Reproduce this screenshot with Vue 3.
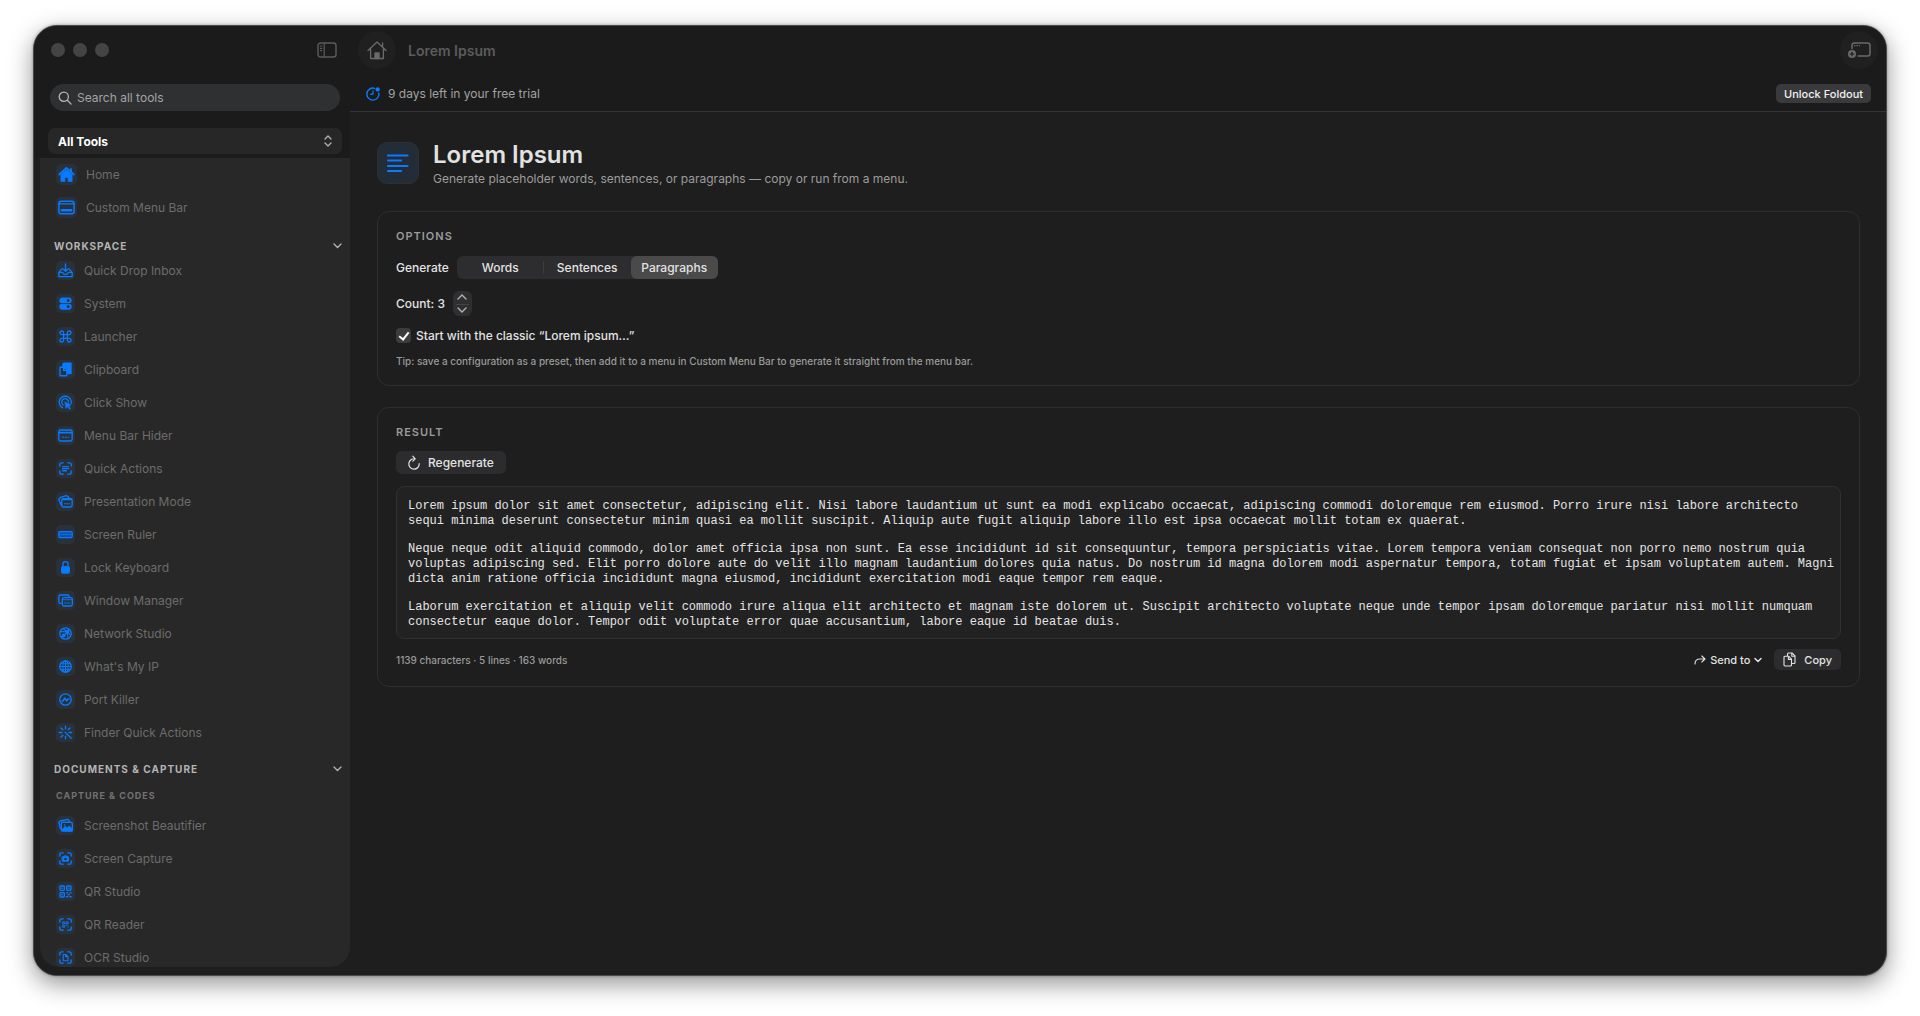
<script setup>
import { ref } from 'vue'

const icons = {
  home: '<path d="M3 10 10 3.8 17 10" stroke-width="1.6"/><path d="M14.3 4.6v3" stroke-width="1.6"/><path d="M4.8 10.2 10 5.8l5.2 4.4v6.3H11.6v-4H8.4v4H4.8z" fill="currentColor" stroke-width="1"/>',
  menubar: '<rect x="2.8" y="4" width="14.4" height="12" rx="2.2"/><path d="M3 6.6h14" stroke-width="1.2"/><path d="M5.6 12.6h8.8" stroke-width="2.4"/>',
  inbox: '<path d="M6.6 8 3 12v4.4h14V12l-3.600-4M3 12h4c.4 1.500 1.400 2.200 3 2.200s2.600-.7 3-2.200h4M10 3v7.600M7.800 8.600 10 10.800l2.200-2.200"/>',
  system: '<rect x="4.200" y="4.400" width="11.600" height="5" rx="2.500" fill="currentColor"/><rect x="4.200" y="10.800" width="11.600" height="5" rx="2.500" fill="currentColor"/><circle cx="12.800" cy="6.900" r="1.500" fill="#282828" stroke="none"/><circle cx="12.800" cy="13.300" r="1.500" fill="#282828" stroke="none"/><path d="M3.500 10.100h13" stroke="#2a333d" stroke-width=".8"/>',
  command: '<path d="M8 8H6.200A1.900 1.900 0 1 1 8 6.200v7.600A1.900 1.900 0 1 1 6.200 12h7.600a1.900 1.900 0 1 1-1.800 1.800V6.200A1.900 1.900 0 1 1 13.800 8z"/>',
  clipboard: '<path d="M8.500 3.200h7.300v11.200h-3.600V9.600L9 6.600H7.200V4.500z" fill="currentColor"/><path d="M4.200 7.600h4.200l3 3v6H4.200zM8 7.800v3.200h3.200"/>',
  click: '<path d="M7 15.600a6.400 6.400 0 1 1 9-4.600M7.600 12.600a3.600 3.600 0 1 1 5.600-3"/><path d="m9.600 9.400 6.400 3.200-2.600.9 1.800 2.700-1.200.8-1.800-2.800-1.800 1.900z" fill="currentColor" stroke-width=".6"/>',
  hider: '<rect x="3" y="4.200" width="14" height="11.600" rx="1.800"/><path d="M3 7h14" stroke-width="1.800"/><path d="M6.500 11.800h7" stroke-dasharray="1.600 1.400" stroke-width="1"/>',
  scantext: '<path d="M4 7.400V6a2 2 0 0 1 2-2h1.600M12.400 4H14a2 2 0 0 1 2 2v1.400M16 12.600V14a2 2 0 0 1-2 2h-1.600M7.600 16H6a2 2 0 0 1-2-2v-1.400M7 8h6M6.600 10.200h7M7 12.400h4"/>',
  windows: '<path d="M5.600 13H4.800A1.800 1.800 0 0 1 3 11.200V6a1.800 1.800 0 0 1 1.800-1.800h7.400A1.800 1.800 0 0 1 14 6"/><rect x="6.600" y="7" width="10.600" height="8.800" rx="1.800"/><path d="M6.800 9.200h10.200" stroke-width="1"/><path d="M9 12.600h6" stroke-width="1" stroke-dasharray="1.200 1"/>',
  present: '<path d="M5.400 13.600 3 7.800 4.600 5.600 11 3.800l2.600 2"/><rect x="6" y="7" width="11" height="8.800" rx="1.800"/><path d="M7 8h9.200" stroke-width="1.600"/><path d="M9 12.400h5.600" stroke-width="1" stroke-dasharray="1.200 1"/>',
  ruler: '<rect x="3" y="7" width="14" height="6.200" rx="1" fill="#0a4fa8"/><path d="M5 9.800h10" stroke-width="1" stroke-dasharray="1.200 1"/>',
  lock: '<rect x="5.800" y="9" width="8.400" height="7" rx="1.200" fill="currentColor" stroke-width="1"/><path d="M7.300 9V6.600a2.700 2.700 0 0 1 5.400 0V9"/>',
  network: '<circle cx="10" cy="10" r="6"/><path d="M4.400 8.200c4-.6 8 0 11 3.400M7.400 4.800c3.600 2.200 5.400 5.600 5.200 10.600M5.400 13.600C9 12 12.600 8.600 13.600 5.200" stroke-width="1.200"/><circle cx="8" cy="12" r="1.400" fill="currentColor"/><circle cx="12.200" cy="8" r="1.200" fill="currentColor"/>',
  globe: '<circle cx="10" cy="10" r="6"/><ellipse cx="10" cy="10" rx="2.800" ry="6" stroke-width="1.100"/><path d="M10 4v12M4 10h12M5 7h10M5 13h10" stroke-width="1.100"/>',
  port: '<circle cx="10" cy="10" r="6"/><path d="M6.200 11.600h1.300L9 8.400l2.200 3 1.200-2h1.400" stroke-width="1.600"/>',
  sparkle: '<path d="M10 3.400v2.800M10 13.800v2.800M3.400 10h2.800M13.800 10h2.800M5.300 5.300l1.900 1.900M14.700 5.300l-1.900 1.900M5.300 14.700l1.900-1.900M9.600 9.600l6.400 6.400"/>',
  photos: '<path d="M4.600 13 3 6.600 4.800 5 12.800 3.600l1.200 2"/><rect x="5.600" y="6.600" width="11.600" height="9.200" rx="1.600"/><path d="m6 15.400 3.800-4 2 2 2-2.400 3.200 3v1.600z" fill="currentColor"/><circle cx="9" cy="9.600" r=".8" fill="currentColor" stroke="none"/>',
  camera: '<path d="M4 7.400V6a2 2 0 0 1 2-2h1.600M12.400 4H14a2 2 0 0 1 2 2v1.400M16 12.600V14a2 2 0 0 1-2 2h-1.600M7.600 16H6a2 2 0 0 1-2-2v-1.400"/><path d="M6.800 8.200h1.400l.8-1h2l.8 1h1.400v4.600H6.800z" fill="currentColor" stroke-width="1"/><circle cx="10" cy="10.500" r="1.300" fill="#1d3148" stroke="none"/>',
  qr: '<rect x="4.200" y="4.200" width="4.600" height="4.600" rx=".8"/><rect x="11.200" y="4.200" width="4.600" height="4.600" rx=".8"/><rect x="4.200" y="11.200" width="4.600" height="4.600" rx=".8"/><path d="M6 6.500h1M13 6.500h1M6 13.500h1M11 11.500h1.400M14.600 11.500H16M12.600 13.500h1.400M11 15.500h1.400M14.600 15.500H16" stroke-width="1.400"/>',
  qrscan: '<path d="M4 7.400V6a2 2 0 0 1 2-2h1.600M12.400 4H14a2 2 0 0 1 2 2v1.400M16 12.600V14a2 2 0 0 1-2 2h-1.600M7.600 16H6a2 2 0 0 1-2-2v-1.400"/><path d="M7.300 7.300h2v2h-2zM10.900 7.300h2v2h-2zM7.300 10.900h2v2h-2zM11 11h.8M12.400 12.600h.6" stroke-width="1"/>',
  docscan: '<path d="M4 7.400V6a2 2 0 0 1 2-2h1.600M12.400 4H14a2 2 0 0 1 2 2v1.400M16 12.600V14a2 2 0 0 1-2 2h-1.600M7.600 16H6a2 2 0 0 1-2-2v-1.400"/><path d="M7.600 6.800h2.800l2.200 2.200v4.400h-5zM10.200 7v2.200h2.200" stroke-width="1.200"/>',
}

const pinned = [
  { name: 'Home', icon: 'home' },
  { name: 'Custom Menu Bar', icon: 'menubar' },
]
const workspace = [
  { name: 'Quick Drop Inbox', icon: 'inbox' },
  { name: 'System', icon: 'system' },
  { name: 'Launcher', icon: 'command' },
  { name: 'Clipboard', icon: 'clipboard' },
  { name: 'Click Show', icon: 'click' },
  { name: 'Menu Bar Hider', icon: 'hider' },
  { name: 'Quick Actions', icon: 'scantext' },
  { name: 'Presentation Mode', icon: 'present' },
  { name: 'Screen Ruler', icon: 'ruler' },
  { name: 'Lock Keyboard', icon: 'lock' },
  { name: 'Window Manager', icon: 'windows' },
  { name: 'Network Studio', icon: 'network' },
  { name: "What's My IP", icon: 'globe' },
  { name: 'Port Killer', icon: 'port' },
  { name: 'Finder Quick Actions', icon: 'sparkle' },
]
const capture = [
  { name: 'Screenshot Beautifier', icon: 'photos' },
  { name: 'Screen Capture', icon: 'camera' },
  { name: 'QR Studio', icon: 'qr' },
  { name: 'QR Reader', icon: 'qrscan' },
  { name: 'OCR Studio', icon: 'docscan' },
]

const units = ['Words', 'Sentences', 'Paragraphs']
const unit = ref('Paragraphs')
const count = ref(3)
const classic = ref(true)
const search = ref('')
const filter = ref('All Tools')

const paragraphs = [
  'Lorem ipsum dolor sit amet consectetur, adipiscing elit. Nisi labore laudantium ut sunt ea modi explicabo occaecat, adipiscing commodi doloremque rem eiusmod. Porro irure nisi labore architecto sequi minima deserunt consectetur minim quasi ea mollit suscipit. Aliquip aute fugit aliquip labore illo est ipsa occaecat mollit totam ex quaerat.',
  'Neque neque odit aliquid commodo, dolor amet officia ipsa non sunt. Ea esse incididunt id sit consequuntur, tempora perspiciatis vitae. Lorem tempora veniam consequat non porro nemo nostrum quia voluptas adipiscing sed. Elit porro dolore aute do velit illo magnam laudantium dolores quia natus. Do nostrum id magna dolorem modi aspernatur tempora, totam fugiat et ipsam voluptatem autem. Magni dicta anim ratione officia incididunt magna eiusmod, incididunt exercitation modi eaque tempor rem eaque.',
  'Laborum exercitation et aliquip velit commodo irure aliqua elit architecto et magnam iste dolorem ut. Suscipit architecto voluptate neque unde tempor ipsam doloremque pariatur nisi mollit numquam consectetur eaque dolor. Tempor odit voluptate error quae accusantium, labore eaque id beatae duis.',
]
</script>

<template>
  <div class="desktop">
    <div class="window">
      <aside class="sidebar">
        <div class="titlebar">
          <div class="lights"><i></i><i></i><i></i></div>
          <button class="plain" aria-label="Toggle sidebar">
            <svg width="20" height="16" viewBox="0 0 20 16" fill="none" stroke="currentColor" stroke-width="1.4">
              <rect x="1" y="1" width="18" height="14" rx="2.500" />
              <path d="M7.200 1v14M3 4h2.200M3 6.300h2.200M3 8.600h2.200" stroke-width="1.200" />
            </svg>
          </button>
        </div>
        <label class="search">
          <svg width="14" height="14" viewBox="0 0 14 14" fill="none" stroke="currentColor" stroke-width="1.300" stroke-linecap="round">
            <circle cx="5.800" cy="5.800" r="4.600" /><path d="m9.300 9.300 3.700 3.700" />
          </svg>
          <input v-model="search" type="text" placeholder="Search all tools" aria-label="Search all tools" />
        </label>
        <label class="filter">
          <select v-model="filter" aria-label="Tool group">
            <option>All Tools</option>
          </select>
          <svg width="8" height="12" viewBox="0 0 8 12" fill="none" stroke="currentColor" stroke-width="1.300" stroke-linecap="round" stroke-linejoin="round">
            <path d="m1 4 3-3 3 3M1 8l3 3 3-3" />
          </svg>
        </label>
        <nav class="list">
          <a v-for="t in pinned" :key="t.name" href="#" class="tool pinned">
            <span class="tile"><svg viewBox="0 0 20 20" v-html="icons[t.icon]"></svg></span>{{ t.name }}
          </a>
          <button class="group">
            WORKSPACE
            <svg width="9" height="6" viewBox="0 0 9 6"><path d="m1 1 3.500 3.500L8 1" /></svg>
          </button>
          <a v-for="t in workspace" :key="t.name" href="#" class="tool">
            <span class="tile"><svg viewBox="0 0 20 20" v-html="icons[t.icon]"></svg></span>{{ t.name }}
          </a>
          <button class="group documents">
            DOCUMENTS &amp; CAPTURE
            <svg width="9" height="6" viewBox="0 0 9 6"><path d="m1 1 3.500 3.500L8 1" /></svg>
          </button>
          <h3 class="subgroup">CAPTURE &amp; CODES</h3>
          <a v-for="t in capture" :key="t.name" href="#" class="tool">
            <span class="tile"><svg viewBox="0 0 20 20" v-html="icons[t.icon]"></svg></span>{{ t.name }}
          </a>
        </nav>
      </aside>

      <main class="main">
        <header class="toolbar">
          <button class="round" aria-label="Home">
            <svg width="20" height="20" viewBox="0 0 20 20" fill="none" stroke="currentColor" stroke-width="1.300" stroke-linecap="round" stroke-linejoin="round">
              <path d="M1 10.500 10 2l9 8.500M15.600 3v4M3.600 8.600V18.500h12.800V8.600" />
              <path d="M8 18.500V13h4v5.500z" fill="currentColor" />
            </svg>
          </button>
          <span class="crumb">Lorem Ipsum</span>
          <button class="round end" aria-label="Add window">
            <svg width="24" height="18" viewBox="0 0 24 18" fill="none" stroke="currentColor" stroke-width="1.500">
              <path d="M5 8V4.200A2.200 2.200 0 0 1 7.200 2h13.600A2.200 2.200 0 0 1 23 4.200v8.600a2.200 2.200 0 0 1-2.200 2.200H10.500" />
              <path d="M7 4.600h6" stroke-dasharray="1.400 1" stroke-width="1.300" />
              <circle cx="5" cy="13" r="4" fill="currentColor" stroke="none" />
              <path d="M5 10.800v4.400M2.800 13h4.400" stroke="#1c1c1c" stroke-width="1.200" />
            </svg>
          </button>
        </header>
        <div class="banner">
          <svg width="14" height="14" viewBox="0 0 14 14" fill="none" stroke="#0a7aff" stroke-width="1.400" stroke-linecap="round">
            <path d="M8.500 1.300A6 6 0 1 0 12.800 6" /><path d="M7 3.800V7.200H4.600" stroke-width="1.200" />
            <circle cx="11.600" cy="2.400" r="2.200" fill="#0a7aff" stroke="none" />
          </svg>
          <span>9 days left in your free trial</span>
          <button class="unlock">Unlock Foldout</button>
        </div>

        <div class="content">
          <div class="intro">
            <div class="badge">
              <svg width="40" height="40" viewBox="0 0 40 40" stroke="#0a7aff" stroke-width="2.200" stroke-linecap="round">
                <path d="M10 12.500h19.500M10 17.500h13M10 23h19.500M10 28h13" />
              </svg>
            </div>
            <div>
              <h1>Lorem Ipsum</h1>
              <p class="sub">Generate placeholder words, sentences, or paragraphs — copy or run from a menu.</p>
            </div>
          </div>

          <section class="card">
            <h2>OPTIONS</h2>
            <div class="row units">
              <span id="unit-label">Generate</span>
              <div class="segments" role="radiogroup" aria-labelledby="unit-label">
                <label v-for="u in units" :key="u" :class="{ on: unit === u }">
                  <input v-model="unit" type="radio" name="unit" :value="u" />{{ u }}
                </label>
              </div>
            </div>
            <div class="row amount">
              <span>Count: {{ count }}</span>
              <div class="stepper">
                <button aria-label="Increase count" @click="count++">
                  <svg width="10" height="6" viewBox="0 0 10 6"><path d="m1 5 4-4 4 4" /></svg>
                </button>
                <button aria-label="Decrease count" @click="count = Math.max(1, count - 1)">
                  <svg width="10" height="6" viewBox="0 0 10 6"><path d="m1 1 4 4 4-4" /></svg>
                </button>
              </div>
            </div>
            <label class="row check">
              <input v-model="classic" type="checkbox" />
              <span>Start with the classic “Lorem ipsum…”</span>
            </label>
            <p class="tip">Tip: save a configuration as a preset, then add it to a menu in Custom Menu Bar to generate it straight from the menu bar.</p>
          </section>

          <section class="card">
            <h2>RESULT</h2>
            <button class="regen">
              <svg width="14" height="16" viewBox="0 0 14 16" fill="none" stroke="currentColor" stroke-width="1.200" stroke-linecap="round" stroke-linejoin="round">
                <path d="M12.200 8.600A5.200 5.200 0 1 1 7.600 3.800M5.800 1.200l2.400 2.600-2.400 2.400" />
              </svg>
              Regenerate
            </button>
            <div class="output">
              <p v-for="(p, i) in paragraphs" :key="i">{{ p }}</p>
            </div>
            <footer class="foot">
              <span class="stats">1139 characters · 5 lines · 163 words</span>
              <button class="send">
                <svg width="12" height="10" viewBox="0 0 12 10" fill="none" stroke="currentColor" stroke-width="1.100" stroke-linecap="round" stroke-linejoin="round">
                  <path d="M1 9c0-3.400 2-5 5-5h4.800M7.800 1l3.200 3-3.200 3" />
                </svg>
                Send to
                <svg width="8" height="6" viewBox="0 0 8 6" fill="none" stroke="currentColor" stroke-width="1.500" stroke-linecap="round" stroke-linejoin="round">
                  <path d="m1 1.500 3 3 3-3" />
                </svg>
              </button>
              <button class="copy">
                <svg width="13" height="15" viewBox="0 0 13 15" fill="none" stroke="currentColor" stroke-width="1.100" stroke-linejoin="round">
                  <path d="M4.500 4V2a1 1 0 0 1 1-1H9l3 3v6.500a1 1 0 0 1-1 1H9" /><path d="M8.800 1v3.200H12" />
                  <path d="M1 5.200a1 1 0 0 1 1-1h3.500l3 3V13a1 1 0 0 1-1 1H2a1 1 0 0 1-1-1z" /><path d="M5.400 4.200v3.200h3.200" />
                </svg>
                Copy
              </button>
            </footer>
          </section>
        </div>
      </main>
    </div>
  </div>
</template>

<style>
body {
  background: #fff;
}
</style>

<style scoped>
.desktop {
  box-sizing: border-box;
  height: 100vh;
  padding: 25px 33px 40px;
  overflow: hidden;
  background: #fff;
  color: #e2e2e2;
  font-family: Inter, "Liberation Sans", sans-serif;
  font-size: 12px;
}
.window {
  box-sizing: border-box;
  display: flex;
  height: 100%;
  border: 1px solid #4a4b4b;
  border-radius: 24px;
  overflow: hidden;
  background: #1e1e1e;
  box-shadow: 0 0 3px rgba(0, 0, 0, 0.35), 0 8px 24px rgba(0, 0, 0, 0.42);
}
button,
input,
select {
  margin: 0;
  padding: 0;
  border: 0;
  background: none;
  color: inherit;
  font: inherit;
}
h1,
h2,
h3,
p {
  margin: 0;
}
svg {
  display: block;
  flex: none;
}

.sidebar {
  box-sizing: border-box;
  display: flex;
  flex: none;
  flex-direction: column;
  width: 316px;
  padding: 0 0 8px 6px;
  background: linear-gradient(#1b1b1b 132px, #1e1e1e 132px);
}
.titlebar {
  display: flex;
  align-items: center;
  justify-content: space-between;
  height: 48px;
  padding: 0 13px 0 11px;
  color: #5c5c5c;
}
.lights {
  display: flex;
  gap: 8px;
}
.lights i {
  width: 14px;
  height: 14px;
  border-radius: 50%;
  background: #444;
}
.search {
  display: flex;
  align-items: center;
  gap: 5px;
  height: 27px;
  margin: 10px 10px 0;
  padding: 0 8px;
  border-radius: 14px;
  background: #2f3032;
  color: #b4b4b4;
}
.search input {
  flex: 1;
  min-width: 0;
  outline: 0;
}
.search input::placeholder {
  color: #a3a3a3;
  opacity: 1;
}
.filter {
  display: flex;
  align-items: center;
  height: 26px;
  margin: 17px 8px 4px;
  padding: 0 10px;
  border-radius: 7px;
  background: #272727;
  color: #b4b4b4;
}
.filter select {
  flex: 1;
  appearance: none;
  outline: 0;
  color: #fff;
  font-weight: 700;
}
.list {
  flex: 1;
  min-height: 0;
  overflow: hidden;
  border-radius: 0 0 20px 20px;
  background: #282828;
}
.tool {
  display: flex;
  align-items: center;
  gap: 9px;
  height: 33px;
  padding-left: 16px;
  color: #6c6c6c;
  text-decoration: none;
}
.tile {
  width: 19px;
  height: 19px;
  border-radius: 5px;
  background: #29313a;
  color: #0a7aff;
}
.pinned .tile {
  width: 21px;
  height: 21px;
}
.tile svg {
  width: 100%;
  height: 100%;
  fill: none;
  stroke: currentColor;
  stroke-width: 1.4;
  stroke-linecap: round;
  stroke-linejoin: round;
}
.group {
  display: flex;
  align-items: center;
  justify-content: space-between;
  width: 100%;
  height: 16px;
  margin: 14px 0 0;
  padding: 0 8px 0 14px;
  color: #b4b4b4;
  font-size: 10px;
  font-weight: 700;
  letter-spacing: 1px;
}
.group svg {
  fill: none;
  stroke: currentColor;
  stroke-width: 1.3;
  stroke-linecap: round;
}
.group.documents {
  margin: 12px 0 11px;
}
.subgroup {
  padding-left: 16px;
  margin-bottom: 5px;
  color: #727272;
  font-size: 9px;
  font-weight: 700;
  letter-spacing: 1px;
  line-height: 16px;
}

.main {
  flex: 1;
  min-width: 0;
}
.toolbar,
.banner {
  display: flex;
  align-items: center;
  background: #1b1b1b;
}
.toolbar {
  height: 48px;
  padding: 0 8px;
  gap: 12px;
}
.round {
  display: grid;
  place-items: center;
  width: 38px;
  height: 38px;
  border-radius: 19px;
  background: #202020;
  color: #6a6a6a;
}
.round.end {
  margin-left: auto;
}
.crumb {
  color: #5c5c5c;
  font-size: 14px;
  font-weight: 600;
}
.banner {
  height: 35px;
  padding: 2px 15px 0 16px;
  gap: 8px;
  border-bottom: 1px solid #333335;
  color: #a2a2a2;
}
.unlock {
  height: 19px;
  margin-left: auto;
  padding: 0 8px;
  border-radius: 5px;
  background: #3a3a3c;
  color: #f0f0f0;
  font-size: 11px;
  font-weight: 500;
}
.content {
  display: flex;
  flex-direction: column;
  gap: 21px;
  padding: 28px 26px 28px 27px;
}
.intro {
  display: flex;
  gap: 14px;
  height: 50px;
}
.badge {
  box-sizing: border-box;
  width: 42px;
  height: 42px;
  margin-top: 2px;
  border: 1px solid #2e3033;
  border-radius: 10px;
  background: #232d38;
}
h1 {
  color: #e2e2e2;
  font-size: 24px;
  font-weight: 600;
  line-height: 30px;
}
.sub {
  color: #9c9c9c;
  line-height: 18px;
}
.card {
  box-sizing: border-box;
  display: flex;
  flex-direction: column;
  align-items: flex-start;
  padding: 16px 18px;
  border: 1px solid #2f2f2f;
  border-radius: 12px;
  background: #1e1e1e;
}
h2 {
  color: #9a9a9a;
  font-size: 11px;
  font-weight: 600;
  letter-spacing: 1px;
  line-height: 16px;
}
.row {
  display: flex;
  align-items: center;
  gap: 8px;
  font-weight: 500;
}
.units {
  margin-top: 12px;
}
.segments {
  display: flex;
  height: 23px;
  border-radius: 6px;
  background: #2d2d2f;
}
.segments label {
  display: grid;
  place-items: center;
  width: 87px;
  border-radius: 6px;
}
.segments label:first-child {
  background: linear-gradient(#3c3c3e, #3c3c3e) right / 1px 13px no-repeat;
}
.segments label.on {
  background: #4a4a4b;
}
.segments input {
  position: absolute;
  opacity: 0;
}
.amount {
  margin-top: 12px;
}
.stepper {
  display: flex;
  flex-direction: column;
  width: 19px;
  height: 25px;
  border-radius: 6px;
  background: #2f2f31;
}
.stepper button {
  display: grid;
  flex: 1;
  place-items: center;
}
.stepper button + button {
  background: linear-gradient(#454547, #454547) top / 13px 1px no-repeat;
}
.stepper svg {
  fill: none;
  stroke: #b0b0b0;
  stroke-width: 1.4;
  stroke-linecap: round;
}
.check {
  gap: 5px;
  margin-top: 12px;
}
.check input {
  display: grid;
  place-items: center;
  width: 15px;
  height: 15px;
  appearance: none;
  border-radius: 4px;
  background: #3c3c3d;
}
.check input:checked::after {
  content: "";
  width: 4px;
  height: 8px;
  margin-bottom: 2px;
  border: solid #fff;
  border-width: 0 2px 2px 0;
  transform: rotate(38deg);
}
.tip {
  margin-top: 10px;
  color: #9a9a9a;
  font-size: 10px;
  font-weight: 500;
  line-height: 16px;
}
.regen {
  display: flex;
  align-items: center;
  gap: 7px;
  height: 23px;
  margin-top: 11px;
  padding: 0 12px 0 11px;
  border-radius: 6px;
  background: #2c2c2f;
  font-weight: 500;
}
.output {
  box-sizing: border-box;
  display: flex;
  flex-direction: column;
  gap: 13px;
  width: 100%;
  margin-top: 12px;
  padding: 12px 4px 8px 11px;
  border: 1px solid #303032;
  border-radius: 8px;
  background: #222;
  color: #e4e4e4;
  font-family: "Liberation Mono", monospace;
  font-size: 12px;
  line-height: 15px;
}
.foot {
  display: flex;
  align-items: center;
  width: 100%;
  margin-top: 10px;
}
.stats {
  flex: 1;
  color: #9a9a9a;
  font-size: 10px;
  font-weight: 500;
}
.send,
.copy {
  display: flex;
  align-items: center;
  font-size: 11px;
  font-weight: 500;
}
.send {
  gap: 4px;
  margin-right: 12px;
}
.copy {
  gap: 8px;
  height: 21px;
  padding: 0 9px;
  border-radius: 5px;
  background: #2c2c2f;
}
</style>
